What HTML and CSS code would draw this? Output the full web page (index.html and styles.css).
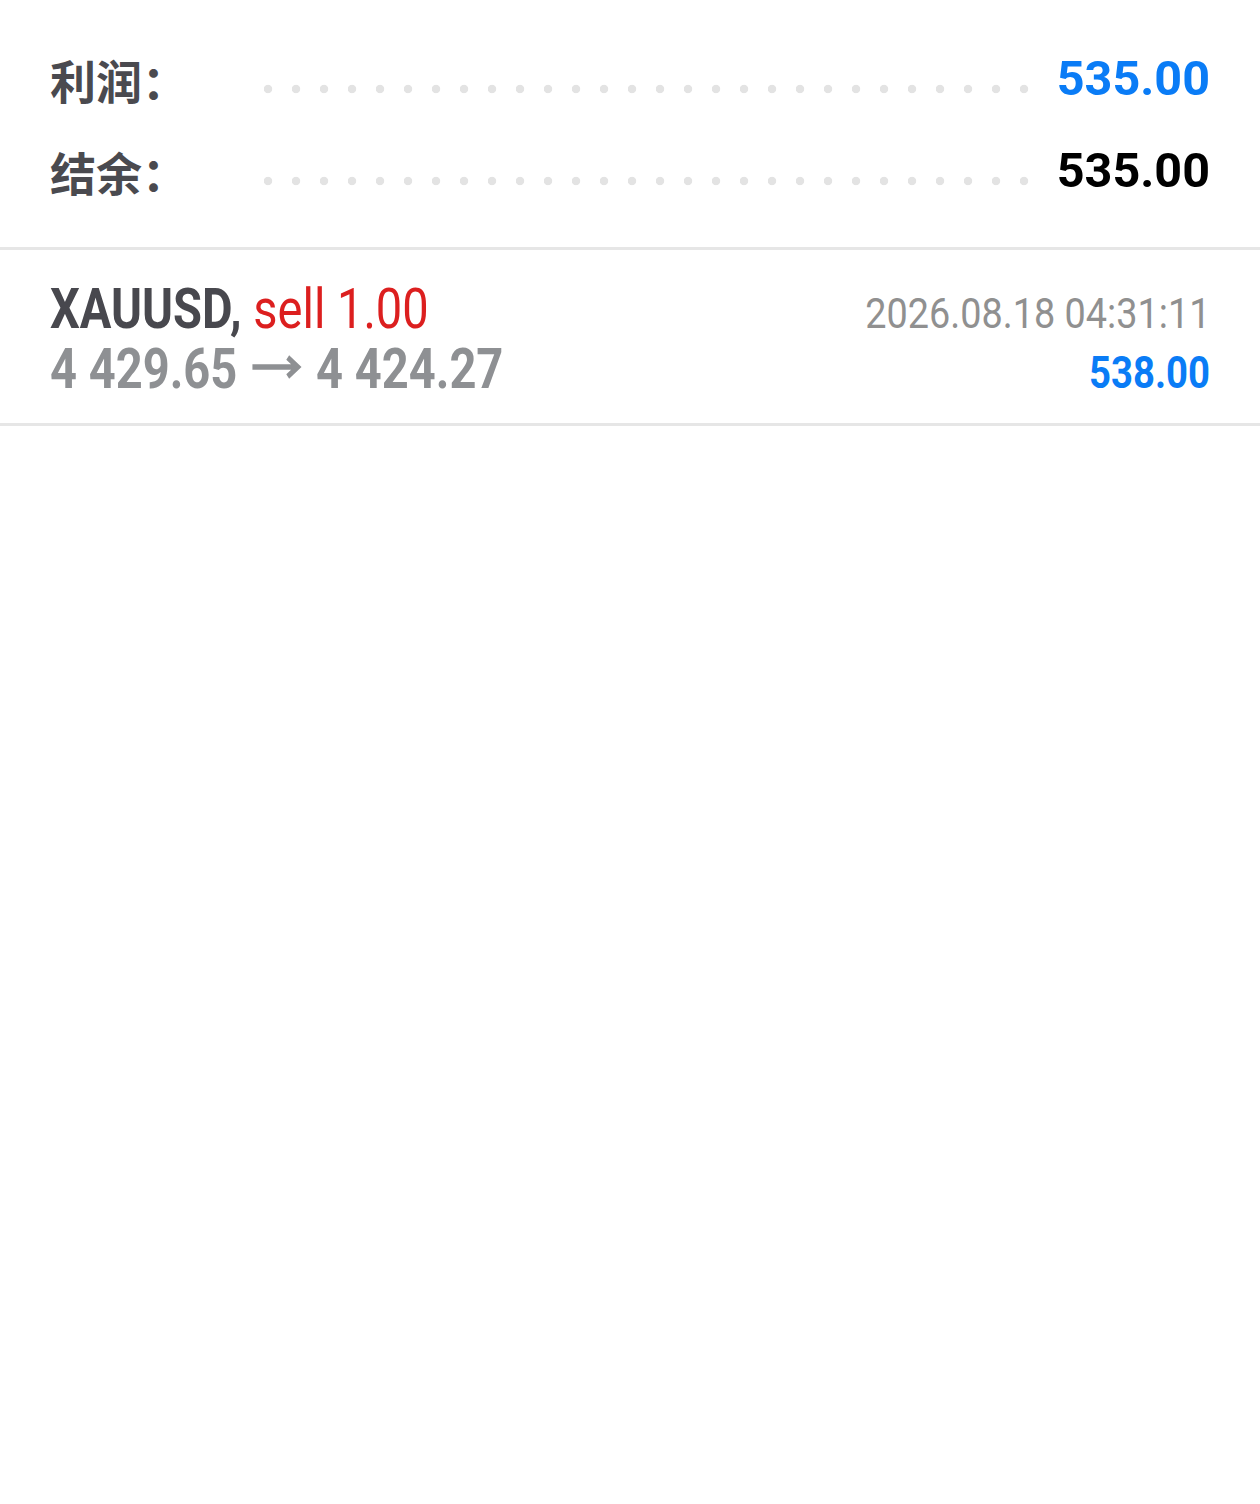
FILE: index.html
```html
<!DOCTYPE html>
<html lang="zh">
<head>
<meta charset="utf-8">
<title>交易</title>
<link rel="stylesheet" href="styles.css">
</head>
<body>
<section class="summary">
  <div class="sum-row">
    <div class="label">利润：</div>
    <div class="dots"></div>
    <div class="value blue">535.00</div>
  </div>
  <div class="sum-row">
    <div class="label">结余：</div>
    <div class="dots"></div>
    <div class="value">535.00</div>
  </div>
</section>
<section class="trade">
  <div class="trade-line">
    <span class="cond left"><b class="sym">XAUUSD,</b> <span class="sell">sell 1.00</span></span>
    <span class="cond right date">2026.08.18 04:31:11</span>
  </div>
  <div class="trade-line">
    <span class="cond left prices">4 429.65 <svg class="arrow" viewBox="0 0 60 24" width="60" height="24" aria-label="→"><path d="M1 12H55M43 2.5L55 12L43 21.5" fill="none" stroke="#8e9093" stroke-width="5.5"/></svg> 4 424.27</span>
    <span class="cond right profit">538.00</span>
  </div>
</section>
</body>
</html>
```
FILE: styles.css
```css
html, body {
  margin: 0;
  padding: 0;
  background: #ffffff;
}
body {
  font-family: Roboto, "Noto Sans CJK SC", sans-serif;
}
.summary {
  padding: 33px 50px 30px 50px;
  border-bottom: 3px solid #e6e6e6;
}
.sum-row {
  display: flex;
  align-items: center;
  height: 92px;
  line-height: 92px;
}
.label {
  width: 214px;
  flex: none;
  font-family: "Noto Sans CJK SC", sans-serif;
  font-weight: 700;
  font-size: 46px;
  color: #4a4a4f;
  white-space: nowrap;
}
.dots {
  flex: 1;
  height: 10px;
  margin-top: 20px;
  margin-right: 24px;
  background-image: radial-gradient(circle at 4px 5px, #e3e3e3 3.8px, rgba(227,227,227,0) 4.6px);
  background-size: 28px 10px;
  background-repeat: repeat-x;
}
.value {
  flex: none;
  font-family: Roboto, sans-serif;
  font-weight: 700;
  font-size: 48.5px;
  color: #000000;
}
.value.blue {
  color: #0a7cf6;
}
.trade {
  padding: 29px 50px 24px 50px;
  border-bottom: 3px solid #e6e6e6;
}
.trade-line {
  display: flex;
  justify-content: space-between;
  align-items: baseline;
  line-height: 60px;
  height: 60px;
  white-space: nowrap;
}
.cond {
  display: inline-block;
  font-family: Roboto, sans-serif;
}
.left {
  transform: scaleX(0.84);
  transform-origin: left center;
  font-size: 56px;
}
.right {
  transform-origin: right center;
}
.sym {
  font-weight: 700;
  color: #48484e;
}
.sell {
  font-weight: 400;
  color: #dc1f1f;
}
.prices {
  font-weight: 700;
  color: #8e9093;
}
.arrow {
  vertical-align: 9px;
  margin: 0 3px;
}
.date {
  font-size: 42px;
  font-weight: 400;
  color: #909090;
  transform: scaleX(0.9);
}
.profit {
  font-size: 44px;
  font-weight: 700;
  color: #0a7cf6;
  transform: scaleX(0.87);
}
```
